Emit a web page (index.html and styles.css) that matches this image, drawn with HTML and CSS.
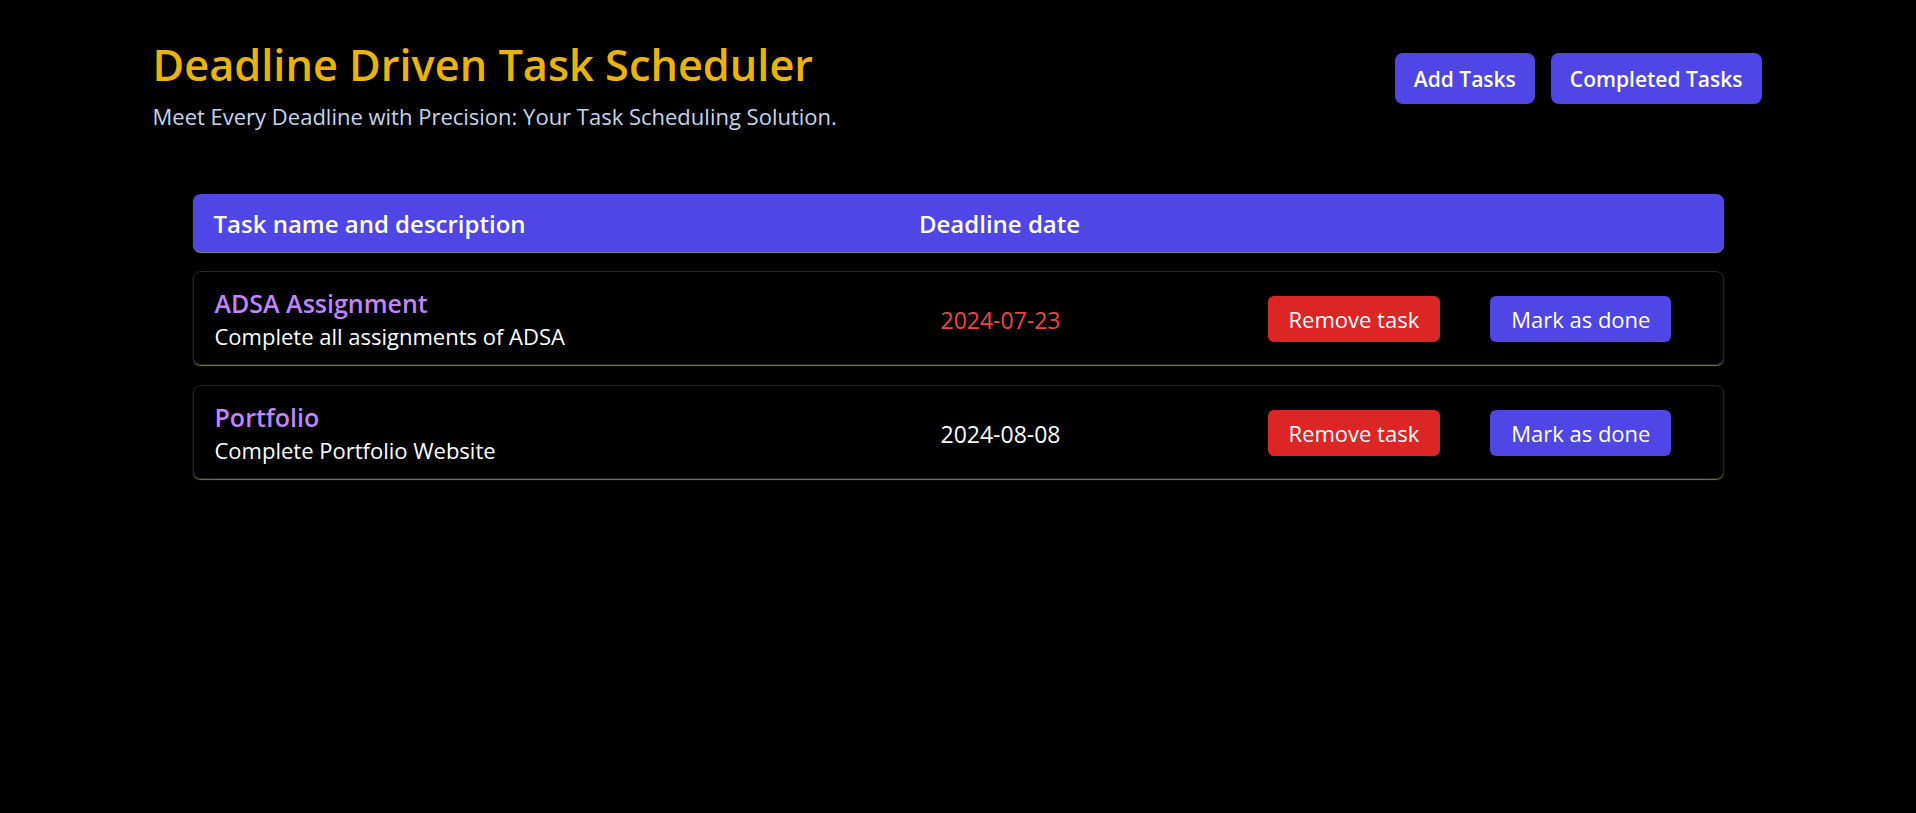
FILE: index.html
```html
<!DOCTYPE html>
<html lang="en">
<head>
<meta charset="utf-8">
<title>Deadline Driven Task Scheduler</title>
<link rel="stylesheet" href="styles.css">
</head>
<body>
<header class="top">
  <div class="brand">
    <h1 class="brand-title">Deadline Driven Task Scheduler</h1>
    <p class="brand-sub">Meet Every Deadline with Precision: Your Task Scheduling Solution.</p>
  </div>
  <nav class="nav">
    <button class="nav-btn">Add Tasks</button>
    <button class="nav-btn">Completed Tasks</button>
  </nav>
</header>
<main class="tasks">
  <div class="task-head">
    <div class="head-name">Task name and description</div>
    <div class="head-date">Deadline date</div>
    <div></div>
  </div>
  <div class="task-row">
    <div class="task-info">
      <div class="task-name">ADSA Assignment</div>
      <div class="task-desc">Complete all assignments of ADSA</div>
    </div>
    <div class="task-date overdue">2024-07-23</div>
    <div class="task-actions">
      <button class="btn btn-remove">Remove task</button>
      <button class="btn btn-done">Mark as done</button>
    </div>
  </div>
  <div class="task-row">
    <div class="task-info">
      <div class="task-name">Portfolio</div>
      <div class="task-desc">Complete Portfolio Website</div>
    </div>
    <div class="task-date">2024-08-08</div>
    <div class="task-actions">
      <button class="btn btn-remove">Remove task</button>
      <button class="btn btn-done">Mark as done</button>
    </div>
  </div>
</main>
</body>
</html>
```
FILE: styles.css
```css
* { box-sizing: border-box; }
html, body { background: #000; }
body {
  margin: 0;
  font-family: "Open Sans", "Noto Sans", sans-serif;
  color: #fff;
  min-height: 813px;
}
button { font-family: inherit; cursor: pointer; border: 0; }

.top {
  width: 1607px;
  margin: 0 auto;
  padding-top: 38px;
  display: flex;
  justify-content: space-between;
  align-items: flex-start;
}
.brand { margin-left: -2px; }
.brand-title {
  margin: 0;
  font-size: 43.3px;
  line-height: 54px;
  font-weight: 600;
  color: #eab308;
}
.brand-sub {
  margin: 10px 0 0;
  font-size: 22px;
  line-height: 28px;
  color: #c7d4ee;
}
.nav {
  display: flex;
  gap: 16px;
  margin-top: 15px;
}
.nav-btn {
  height: 51px;
  padding: 0 19px;
  border-radius: 8px;
  background: #4f46e5;
  color: #fff;
  font-size: 21px;
  font-weight: 600;
}

.tasks {
  width: 1531px;
  margin: 64px auto 0;
  display: flex;
  flex-direction: column;
  gap: 20px;
}
.task-head, .task-row {
  display: grid;
  grid-template-columns: 586px 400px 1fr;
  align-items: center;
  padding: 0 21px;
  border-radius: 8px;
}
.task-head {
  height: 58px;
  margin-bottom: -1px;
  background: #4f46e5;
  box-shadow: 0 1px 1px #8c8c8c;
  font-size: 24px;
  font-weight: 600;
}
.head-date { text-align: center; }

.task-row {
  height: 94px;
  border: 1px solid #26281c;
  box-shadow: 0 1px 1px #707c4c;
}
.task-info { padding-top: 2px; }
.task-name {
  font-size: 25px;
  line-height: 34px;
  font-weight: 600;
  color: #c084fc;
}
.task-desc {
  font-size: 22px;
  line-height: 32px;
}
.task-date {
  text-align: center;
  font-size: 23px;
  padding-top: 4px;
}
.task-date.overdue { color: #ef4444; }
.task-actions {
  display: flex;
  gap: 50px;
  padding-left: 67px;
  padding-top: 2px;
}
.btn {
  height: 46px;
  padding: 0 21px;
  border-radius: 6px;
  color: #fff;
  font-size: 22px;
}
.btn-remove { background: #dc2626; }
.btn-done { background: #4f46e5; }
```
